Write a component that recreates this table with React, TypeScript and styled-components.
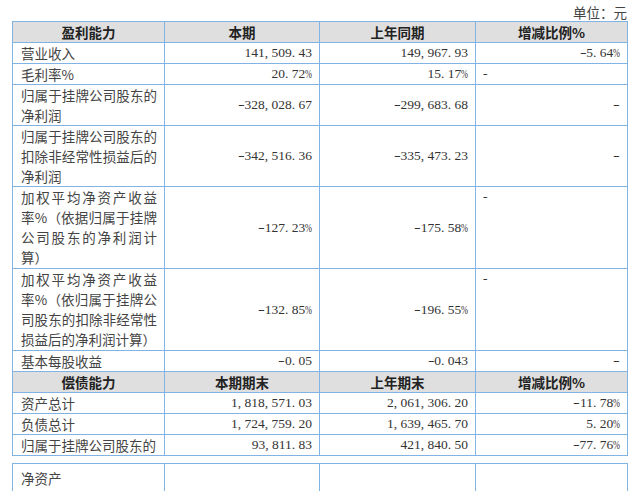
import React from 'react';
import styled, { createGlobalStyle } from 'styled-components';

const Global = createGlobalStyle`
  html, body { margin: 0; padding: 0; background: #ffffff; overflow: hidden; }
  body { font-family: "Noto Sans CJK SC", sans-serif; }
`;

const Page = styled.div`
  width: 643px;
  height: 491px;
  box-sizing: border-box;
  padding-left: 12px;
  overflow: hidden;
`;

const Unit = styled.div`
  height: 21px;
  line-height: 24px;
  text-align: right;
  padding-right: 16px;
  font-size: 13.5px;
  color: #444;
`;

const Table = styled.table<{ $gap?: number }>`
  border-collapse: collapse;
  table-layout: fixed;
  width: 615px;
  margin-top: ${(p) => p.$gap ?? 0}px;
  font-size: 13.5px;
  color: #333;
`;

const Col = styled.col<{ $w: number }>`
  width: ${(p) => p.$w}px;
`;

const Row = styled.tr<{ $h?: number }>`
  ${(p) => (p.$h ? `height: ${p.$h}px;` : '')}
`;

const Head = styled.th`
  border: 1px solid #82b3e4;
  background: #dfdfdf;
  padding: 0;
  height: 20px;
  line-height: 20px;
  font-weight: 700;
  font-size: 13.5px;
  color: #222;
  text-align: center;
  font-family: "Noto Sans CJK SC", sans-serif;
`;

const Cell = styled.td<{ $align?: 'left' | 'right'; $valign?: 'top' | 'middle'; $padBottom?: number; $padTop?: number }>`
  border: 1px solid #82b3e4;
  padding: ${(p) => p.$padTop ?? 0}px 7px ${(p) => p.$padBottom ?? 0}px 7px;
  line-height: 20px;
  font-family: "Liberation Serif", serif;
  text-align: ${(p) => p.$align ?? 'right'};
  vertical-align: ${(p) => p.$valign ?? 'middle'};
`;

const LabelCell = styled(Cell)`
  padding-left: 8px;
  padding-right: 7px;
  font-family: "Noto Sans CJK SC", sans-serif;
  color: #444;
`;

const Line = styled.div<{ $justify: boolean }>`
  height: 20px;
  line-height: 20px;
  text-align: ${(p) => (p.$justify ? 'justify' : 'left')};
  text-align-last: ${(p) => (p.$justify ? 'justify' : 'left')};
  text-justify: inter-character;
`;

const NumText = styled.div`
  height: 20px;
  line-height: 20px;
  font-family: "Liberation Serif", serif;
  font-size: 13.5px;
  color: #333;
  white-space: nowrap;
`;

const Punct = styled.span`
  display: inline-block;
  width: 0.5em;
  text-align: left;
`;

const Pct = styled.span`
  display: inline-block;
  width: 0.5em;
  transform: scaleX(0.62);
  transform-origin: left center;
`;

const Minus = styled.span`
  display: inline-block;
  width: 0.5em;
  text-align: center;
  transform: scaleX(1.5);
`;

const Dash = styled.div`
  height: 20px;
  line-height: 20px;
  font-family: "Liberation Serif", serif;
  color: #333;
`;

const Num: React.FC<{ v: string }> = ({ v }) => (
  <NumText>
    {v.split('').map((ch, i) => {
      if (ch === ',' || ch === '.') return <Punct key={i}>{ch}</Punct>;
      if (ch === '%') return <Pct key={i}>{ch}</Pct>;
      if (ch === '-') return <Minus key={i}>{ch}</Minus>;
      return <React.Fragment key={i}>{ch}</React.Fragment>;
    })}
  </NumText>
);

type Change = { v: string; mode: 'right' | 'topleft' };
type DataRow = { label: string[]; a: string; b: string; c: Change };

const profit: DataRow[] = [
  { label: ['营业收入'], a: '141,509.43', b: '149,967.93', c: { v: '-5.64%', mode: 'right' } },
  { label: ['毛利率%'], a: '20.72%', b: '15.17%', c: { v: '-', mode: 'topleft' } },
  { label: ['归属于挂牌公司股东的', '净利润'], a: '-328,028.67', b: '-299,683.68', c: { v: '-', mode: 'right' } },
  {
    label: ['归属于挂牌公司股东的', '扣除非经常性损益后的', '净利润'],
    a: '-342,516.36',
    b: '-335,473.23',
    c: { v: '-', mode: 'right' },
  },
  {
    label: ['加权平均净资产收益', '率%（依据归属于挂牌', '公司股东的净利润计', '算）'],
    a: '-127.23%',
    b: '-175.58%',
    c: { v: '-', mode: 'topleft' },
  },
  {
    label: ['加权平均净资产收益', '率%（依归属于挂牌公', '司股东的扣除非经常性', '损益后的净利润计算）'],
    a: '-132.85%',
    b: '-196.55%',
    c: { v: '-', mode: 'topleft' },
  },
  { label: ['基本每股收益'], a: '-0.05', b: '-0.043', c: { v: '-', mode: 'right' } },
];

const debt: DataRow[] = [
  { label: ['资产总计'], a: '1,818,571.03', b: '2,061,306.20', c: { v: '-11.78%', mode: 'right' } },
  { label: ['负债总计'], a: '1,724,759.20', b: '1,639,465.70', c: { v: '5.20%', mode: 'right' } },
  { label: ['归属于挂牌公司股东的'], a: '93,811.83', b: '421,840.50', c: { v: '-77.76%', mode: 'right' } },
];

const Cols = () => (
  <colgroup>
    <Col $w={152} />
    <Col $w={155} />
    <Col $w={156} />
    <Col $w={152} />
  </colgroup>
);

const HeadRow: React.FC<{ titles: string[] }> = ({ titles }) => (
  <tr>
    {titles.map((t) => (
      <Head key={t}>{t}</Head>
    ))}
  </tr>
);

const BodyRow: React.FC<{ r: DataRow }> = ({ r }) => {
  const extra = r.label.length >= 4 ? 1 : 0;
  return (
    <tr>
      <LabelCell $align="left" $valign="top" $padBottom={extra}>
        {r.label.map((l, i) => (
          <Line key={i} $justify={r.label.length > 1 && i < r.label.length - 1}>
            {l}
          </Line>
        ))}
      </LabelCell>
      <Cell>
        <Num v={r.a} />
      </Cell>
      <Cell>
        <Num v={r.b} />
      </Cell>
      {r.c.mode === 'right' ? (
        <Cell>
          <Num v={r.c.v} />
        </Cell>
      ) : (
        <Cell $align="left" $valign="top">
          <Dash>{r.c.v}</Dash>
        </Cell>
      )}
    </tr>
  );
};

export default function App() {
  return (
    <Page>
      <Global />
      <Unit>单位：元</Unit>
      <Table>
        <Cols />
        <tbody>
          <HeadRow titles={['盈利能力', '本期', '上年同期', '增减比例%']} />
          {profit.map((r, i) => (
            <BodyRow key={i} r={r} />
          ))}
          <HeadRow titles={['偿债能力', '本期期末', '上年期末', '增减比例%']} />
          {debt.map((r, i) => (
            <BodyRow key={i} r={r} />
          ))}
        </tbody>
      </Table>
      <Table $gap={7}>
        <Cols />
        <tbody>
          <Row $h={34}>
            <LabelCell $align="left" $valign="top" $padTop={4}>
              <Line $justify={false}>净资产</Line>
            </LabelCell>
            <Cell />
            <Cell />
            <Cell />
          </Row>
        </tbody>
      </Table>
    </Page>
  );
}
